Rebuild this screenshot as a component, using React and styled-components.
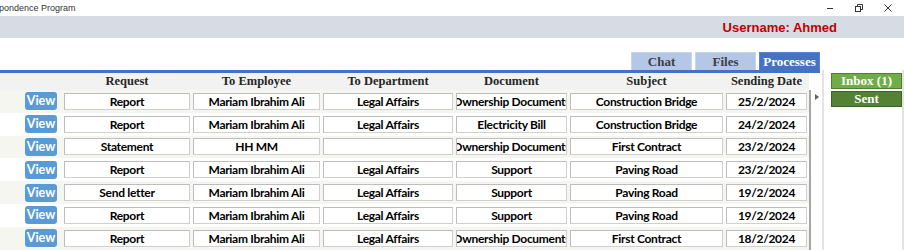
import React from "react";
import styled, { createGlobalStyle } from "styled-components";

const GlobalStyle = createGlobalStyle`
    body {
        margin: 0;
        background: #FFFFFF;
        font-family: "Lato", "Open Sans", sans-serif;
        overflow: hidden;
    }
`;

const Window = styled.div`
    width: 904px;
    height: 250px;
    overflow: hidden;
    display: flex;
    flex-direction: column;
`;

const TitleBar = styled.div`
    height: 16px;
    display: flex;
    align-items: center;
    justify-content: space-between;
`;

const Title = styled.span`
    font-family: "Liberation Sans", Arial, sans-serif;
    font-size: 9px;
    color: #333333;
    margin-left: -1px;
`;

const Controls = styled.div`
    display: flex;
    align-items: center;
    height: 100%;
    padding-right: 2px;
`;

const ControlBtn = styled.div`
    width: 29px;
    height: 16px;
    display: flex;
    align-items: center;
    justify-content: center;
`;

const UserBar = styled.div`
    height: 22px;
    background: #D6DCE4;
    display: flex;
    align-items: center;
    justify-content: flex-end;
    padding-right: 67px;
`;

const UserName = styled.span`
    font-family: "Liberation Sans", Arial, sans-serif;
    font-weight: bold;
    font-size: 13px;
    color: #C00000;
`;

const TabRow = styled.div`
    height: 32px;
    display: flex;
    align-items: flex-end;
    justify-content: flex-end;
    gap: 3px;
    padding-right: 84px;
`;

const Tab = styled.div`
    width: 61px;
    height: 18px;
    box-sizing: border-box;
    display: flex;
    align-items: center;
    justify-content: center;
    font-family: "Liberation Serif", serif;
    font-weight: bold;
    font-size: 13px;
    background: ${p => (p.$active ? "#4472C4" : "#B4C7E7")};
    color: ${p => (p.$active ? "#FFFFFF" : "#404040")};
    border: 1px solid ${p => (p.$active ? "#5B82CC" : "#C9D7EE")};
    border-bottom: none;
`;

const Main = styled.div`
    flex: 1;
    display: flex;
`;

const TableArea = styled.div`
    width: 822px;
    display: flex;
    flex-direction: column;
`;

const BlueLine = styled.div`
    width: 820px;
    height: 3px;
    background: #4472C4;
`;

const TableBody = styled.div`
    flex: 1;
    display: flex;
`;

const Table = styled.div`
    width: 809px;
    display: flex;
    flex-direction: column;
`;

const ScrollCol = styled.div`
    width: 11px;
    margin-top: 17px;
    border-left: 2px solid #A6A6A6;
    display: flex;
    justify-content: center;
    padding-top: 4px;
`;

const Arrow = styled.div`
    width: 0;
    height: 0;
    border-top: 3px solid transparent;
    border-bottom: 3px solid transparent;
    border-left: 4px solid #606060;
`;

const Grid = styled.div`
    display: grid;
    grid-template-columns: 36px 126px 127px 130px 111px 153px 81px;
    column-gap: 3px;
    padding-left: 25px;
    align-items: center;
`;

const HeaderRow = styled(Grid)`
    height: 17px;
    background: #F2F2F2;
`;

const HeadCell = styled.div`
    font-family: "Liberation Serif", serif;
    font-weight: bold;
    font-size: 12.5px;
    color: #262626;
    text-align: center;
    white-space: nowrap;
`;

const Row = styled(Grid)`
    height: 22.8px;
    background: ${p => (p.$shaded ? "#F5F6EF" : "#FFFFFF")};
`;

const ViewButton = styled.button`
    width: 32px;
    height: 18px;
    padding: 0;
    border: none;
    border-radius: 3px;
    background: #5B9BD5;
    color: #FFFFFF;
    font-family: "Lato", sans-serif;
    font-weight: bold;
    font-size: 12.5px;
    line-height: 18px;
`;

const Field = styled.div`
    height: 17px;
    box-sizing: border-box;
    border: 1px solid #CFCFCF;
    border-top-color: #BDBDBD;
    border-left-color: #BDBDBD;
    background: #FFFFFF;
    display: flex;
    align-items: center;
    justify-content: center;
    overflow: hidden;
    white-space: nowrap;
    font-weight: bold;
    font-size: 12px;
    letter-spacing: -0.3px;
    color: #000000;
`;

const SidePanel = styled.div`
    flex: 1;
    border-left: 2px solid #E3E3E3;
    border-right: 2px solid #E3E3E3;
    padding: 3px 0 0 7px;
    display: flex;
    flex-direction: column;
    gap: 2px;
`;

const SideButton = styled.div`
    height: 16px;
    box-sizing: border-box;
    display: flex;
    align-items: center;
    justify-content: center;
    font-family: "Liberation Serif", serif;
    font-weight: bold;
    font-size: 13px;
    color: #FFFFFF;
    background: ${p => (p.$dark ? "#548235" : "#70AD47")};
    border: 1px solid ${p => (p.$dark ? "#3F6428" : "#507E32")};
`;

const headers = ["Request", "To Employee", "To Department", "Document", "Subject", "Sending Date"];

const rows = [
    ["Report", "Mariam Ibrahim Ali", "Legal Affairs", "Ownership Documents", "Construction Bridge", "25/2/2024"],
    ["Report", "Mariam Ibrahim Ali", "Legal Affairs", "Electricity Bill", "Construction Bridge", "24/2/2024"],
    ["Statement", "HH MM", "", "Ownership Documents", "First Contract", "23/2/2024"],
    ["Report", "Mariam Ibrahim Ali", "Legal Affairs", "Support", "Paving Road", "23/2/2024"],
    ["Send letter", "Mariam Ibrahim Ali", "Legal Affairs", "Support", "Paving Road", "19/2/2024"],
    ["Report", "Mariam Ibrahim Ali", "Legal Affairs", "Support", "Paving Road", "19/2/2024"],
    ["Report", "Mariam Ibrahim Ali", "Legal Affairs", "Ownership Documents", "First Contract", "18/2/2024"],
];

const App = () => {
    return (
        <React.Fragment>
            <GlobalStyle />
            <Window>
                <TitleBar>
                    <Title>pondence Program</Title>
                    <Controls>
                        <ControlBtn>
                            <svg width="10" height="10" viewBox="0 0 10 10">
                                <line x1="2" y1="5.5" x2="8" y2="5.5" stroke="#333" strokeWidth="1" />
                            </svg>
                        </ControlBtn>
                        <ControlBtn>
                            <svg width="10" height="10" viewBox="0 0 10 10">
                                <rect x="1.5" y="3.5" width="5" height="5" fill="none" stroke="#333" strokeWidth="1" />
                                <path d="M3.5 3.5 V1.5 H8.5 V6.5 H6.5" fill="none" stroke="#333" strokeWidth="1" />
                            </svg>
                        </ControlBtn>
                        <ControlBtn>
                            <svg width="10" height="10" viewBox="0 0 10 10">
                                <path d="M1.5 1.5 L8.5 8.5 M8.5 1.5 L1.5 8.5" stroke="#333" strokeWidth="1" />
                            </svg>
                        </ControlBtn>
                    </Controls>
                </TitleBar>

                <UserBar>
                    <UserName>Username: Ahmed</UserName>
                </UserBar>

                <TabRow>
                    <Tab>Chat</Tab>
                    <Tab>Files</Tab>
                    <Tab $active>Processes</Tab>
                </TabRow>

                <Main>
                    <TableArea>
                        <BlueLine />
                        <TableBody>
                            <Table>
                                <HeaderRow>
                                    <span />
                                    {headers.map(h => (
                                        <HeadCell key={h}>{h}</HeadCell>
                                    ))}
                                </HeaderRow>
                                {rows.map((r, i) => (
                                    <Row key={i} $shaded={i % 2 === 0}>
                                        <ViewButton>View</ViewButton>
                                        {r.map((c, j) => (
                                            <Field key={j}>{c}</Field>
                                        ))}
                                    </Row>
                                ))}
                            </Table>
                            <ScrollCol>
                                <Arrow />
                            </ScrollCol>
                        </TableBody>
                    </TableArea>
                    <SidePanel>
                        <SideButton>Inbox (1)</SideButton>
                        <SideButton $dark>Sent</SideButton>
                    </SidePanel>
                </Main>
            </Window>
        </React.Fragment>
    );
};

export default App;
